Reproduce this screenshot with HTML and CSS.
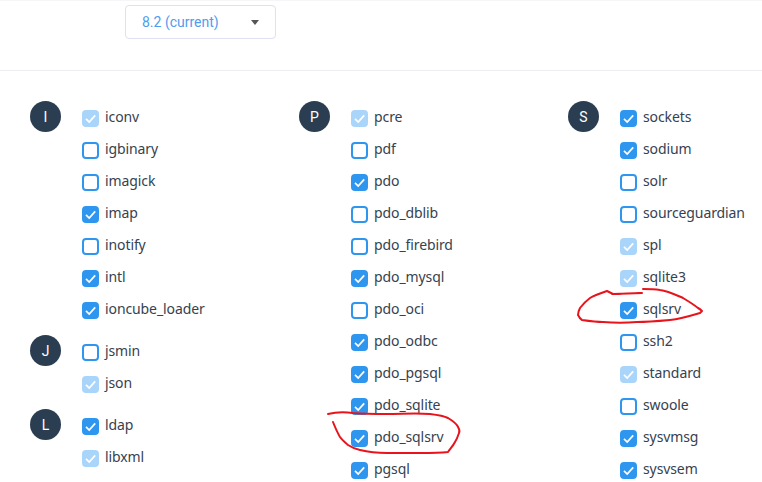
FILE: index.html
```html
<!DOCTYPE html>
<html lang="en">
<head>
<meta charset="utf-8">
<title>PHP extensions</title>
<link rel="stylesheet" href="styles.css">
</head>
<body>
<svg width="0" height="0" class="defs"><defs>
<symbol id="tick" viewBox="0 0 17 17"><path d="M4 8.8 7.2 12 13.2 5.4" fill="none" stroke="#fff" stroke-width="1.7"/></symbol>
</defs></svg>
<header class="top">
  <div class="select"><span>8.2 (current)</span><i class="caret"></i></div>
</header>
<main class="columns">
  <section class="col">
    <div class="group"><div class="badge">I</div><ul>
      <li><b class="box locked"><svg><use href="#tick"/></svg></b>iconv</li>
      <li><b class="box"></b>igbinary</li>
      <li><b class="box"></b>imagick</li>
      <li><b class="box on"><svg><use href="#tick"/></svg></b>imap</li>
      <li><b class="box"></b>inotify</li>
      <li><b class="box on"><svg><use href="#tick"/></svg></b>intl</li>
      <li><b class="box on"><svg><use href="#tick"/></svg></b>ioncube_loader</li>
    </ul></div>
    <div class="group"><div class="badge">J</div><ul>
      <li><b class="box"></b>jsmin</li>
      <li><b class="box locked"><svg><use href="#tick"/></svg></b>json</li>
    </ul></div>
    <div class="group"><div class="badge">L</div><ul>
      <li><b class="box on"><svg><use href="#tick"/></svg></b>ldap</li>
      <li><b class="box locked"><svg><use href="#tick"/></svg></b>libxml</li>
    </ul></div>
  </section>
  <section class="col">
    <div class="group"><div class="badge">P</div><ul>
      <li><b class="box locked"><svg><use href="#tick"/></svg></b>pcre</li>
      <li><b class="box"></b>pdf</li>
      <li><b class="box on"><svg><use href="#tick"/></svg></b>pdo</li>
      <li><b class="box"></b>pdo_dblib</li>
      <li><b class="box"></b>pdo_firebird</li>
      <li><b class="box on"><svg><use href="#tick"/></svg></b>pdo_mysql</li>
      <li><b class="box"></b>pdo_oci</li>
      <li><b class="box on"><svg><use href="#tick"/></svg></b>pdo_odbc</li>
      <li><b class="box on"><svg><use href="#tick"/></svg></b>pdo_pgsql</li>
      <li><b class="box on"><svg><use href="#tick"/></svg></b>pdo_sqlite</li>
      <li><b class="box on"><svg><use href="#tick"/></svg></b>pdo_sqlsrv</li>
      <li><b class="box on"><svg><use href="#tick"/></svg></b>pgsql</li>
    </ul></div>
  </section>
  <section class="col">
    <div class="group"><div class="badge">S</div><ul>
      <li><b class="box on"><svg><use href="#tick"/></svg></b>sockets</li>
      <li><b class="box on"><svg><use href="#tick"/></svg></b>sodium</li>
      <li><b class="box"></b>solr</li>
      <li><b class="box"></b>sourceguardian</li>
      <li><b class="box locked"><svg><use href="#tick"/></svg></b>spl</li>
      <li><b class="box locked"><svg><use href="#tick"/></svg></b>sqlite3</li>
      <li><b class="box on"><svg><use href="#tick"/></svg></b>sqlsrv</li>
      <li><b class="box"></b>ssh2</li>
      <li><b class="box locked"><svg><use href="#tick"/></svg></b>standard</li>
      <li><b class="box"></b>swoole</li>
      <li><b class="box on"><svg><use href="#tick"/></svg></b>sysvmsg</li>
      <li><b class="box on"><svg><use href="#tick"/></svg></b>sysvsem</li>
    </ul></div>
  </section>
</main>
<svg class="ink" width="762" height="482" viewBox="0 0 762 482">
  <path d="M328 414C336 412 345 412 353 413C365 414 376 414 387 414C402 414 416 413 430 414C438 415 444 416 448 418C453 421 457 424 458 427C460 430 460 431 459 433C458 436 457 439 455 442C453 446 450 449 448 452C439 453 430 453 420 453C409 453 398 453 387 453C377 453 368 452 360 450C355 449 351 447 348 445C345 442 342 440 340 437C337 432 335 427 333 422"/>
  <path d="M612 294C622 294 632 293 642 293L613 294C611 293 609 292 607 291C601 293 595 295 590 298C586 301 583 304 580 308C579 310 578 313 578 315C579 317 580 319 582 320C589 321 596 322 603 322C614 323 626 323 637 322C648 322 659 321 670 320C680 319 690 316 700 313L702 311C701 310 700 309 698 308C693 304 688 301 683 298C676 295 668 291 660 290C654 289 648 289 643 289"/>
</svg>
</body>
</html>
```
FILE: styles.css
```css
* { box-sizing: border-box; }
html, body { margin: 0; height: 482px; overflow: hidden; background: #fff; }
body { position: relative; font-family: "Noto Sans", sans-serif; font-size: 14px; letter-spacing: -0.1px; color: #36424f; }
.defs { position: absolute; }
.top { height: 71px; padding: 4px 0 0 125px; border-top: 1px solid #f6f6f8; border-bottom: 1px solid #ebedf2; }
.select {
  width: 151px; height: 34px; padding: 0 16px;
  display: flex; align-items: center; justify-content: space-between;
  border: 1px solid #dfe0f0; border-radius: 4px;
  font-family: Roboto, sans-serif; font-size: 14px; letter-spacing: 0; color: #4f9cf0;
}
.caret { width: 0; height: 0; border: 4px solid transparent; border-top: 5px solid #555; border-bottom: 0; }
.columns { display: grid; grid-template-columns: 269px 269px 1fr; padding: 30px 0 0 30px; }
.group { display: flex; margin-bottom: 10px; }
.badge {
  flex: none; width: 31px; height: 31px; margin-right: 21px; border-radius: 50%;
  display: flex; align-items: center; justify-content: center;
  background: #2b3d51; color: #fff; font-family: Roboto, sans-serif; font-size: 14px; letter-spacing: 0;
}
ul { list-style: none; margin: 0; padding: 0; }
li { height: 32px; padding-bottom: 2px; display: flex; align-items: center; gap: 6px; white-space: nowrap; }
.box { flex: none; width: 17px; height: 17px; margin-top: 5px; border: 2px solid #2f96ef; border-radius: 4px; background: #fff; position: relative; }
.box svg { position: absolute; inset: -2px; width: 17px; height: 17px; }
.on { background: #2f96ef; }
.locked { background: #aad5fa; border-color: #aad5fa; }
.ink { position: absolute; left: 0; top: 0; fill: none; stroke: #e8141c; stroke-width: 2; stroke-linecap: round; stroke-linejoin: round; }
```
